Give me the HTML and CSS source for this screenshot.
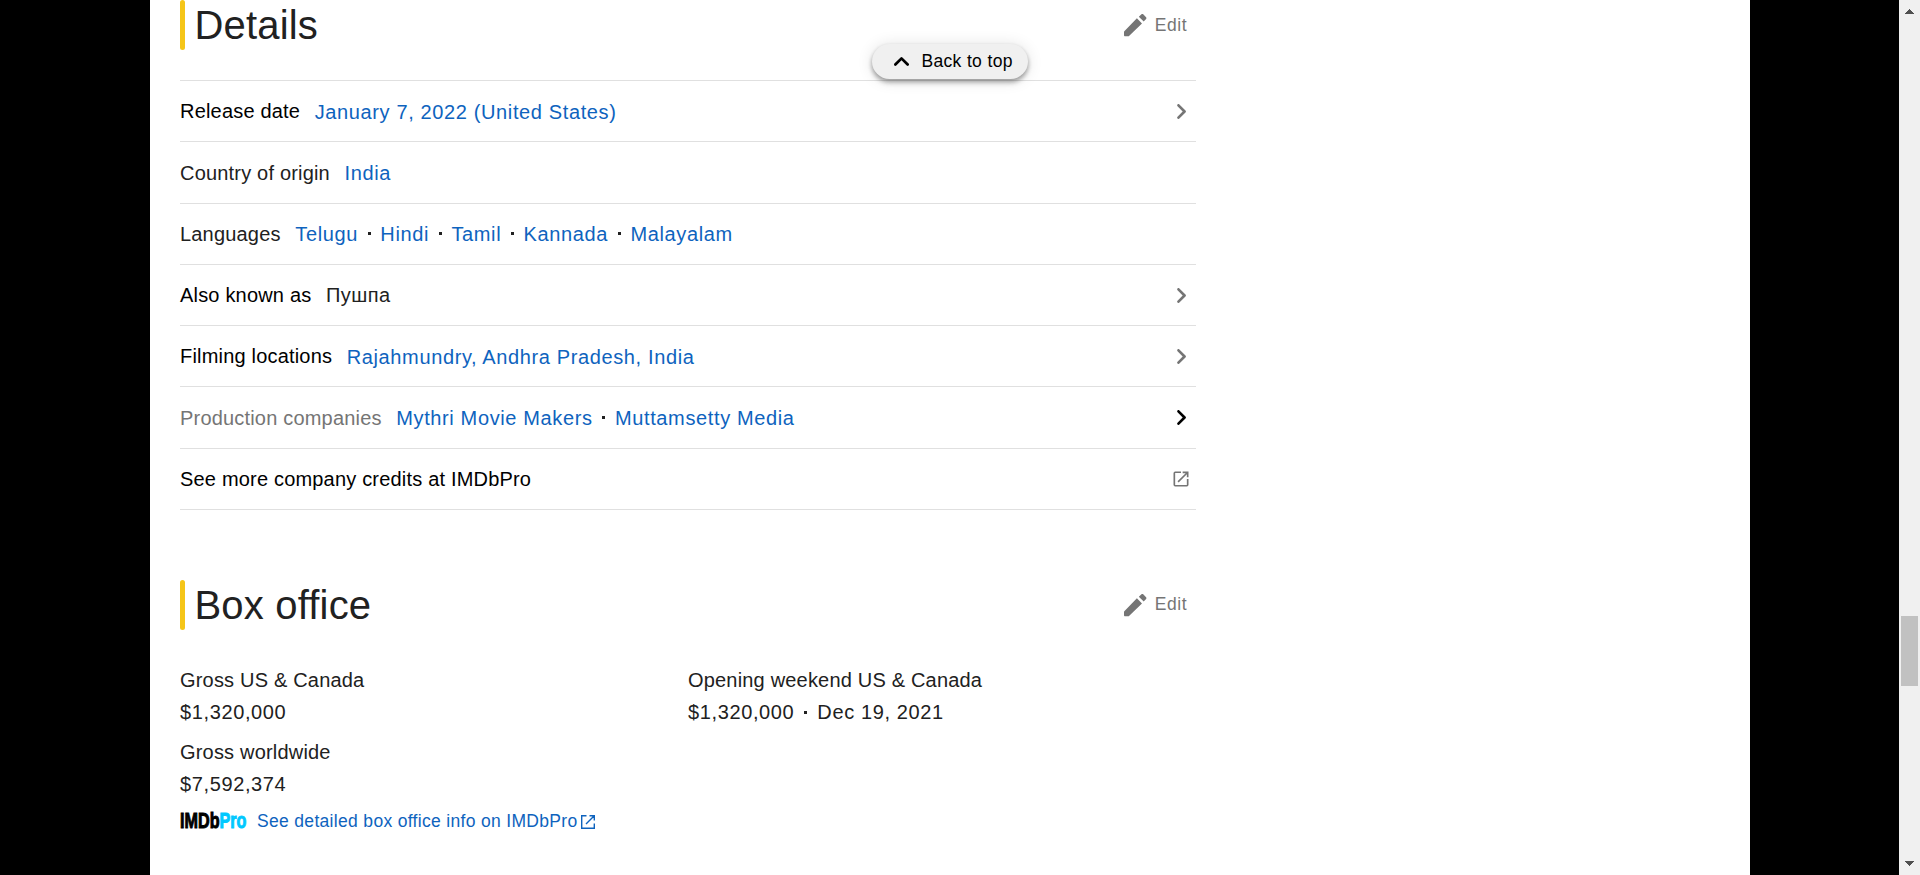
FILE: index.html
```html
<!DOCTYPE html>
<html lang="en">
<head>
<meta charset="utf-8">
<title>Details</title>
<link rel="stylesheet" href="styles.css">
</head>
<body>
<svg class="defs" width="0" height="0">
  <symbol id="pencil" viewBox="0 0 24 24"><path d="M1 18.6V21.8c0 .6.4 1 1 1h3.2c.3 0 .5-.1.7-.3L18.6 10.200 13.600 5.200 1.300 17.900c-.2.200-.3.400-.3.700z"/><path d="M22.600 5.800c.5-.5.5-1.200 0-1.700L19.800 1.300c-.5-.5-1.200-.5-1.700 0L15.500 3.600 20.300 8.400z"/></symbol>
  <symbol id="chevron" viewBox="0 0 24 24"><path d="M5.622.631A2.153 2.153 0 0 0 5 2.147c0 .568.224 1.113.622 1.515l8.249 8.340-8.250 8.340a2.160 2.160 0 0 0-.548 2.070c.196.740.768 1.317 1.499 1.515a2.104 2.104 0 0 0 2.048-.555l9.758-9.866a2.153 2.153 0 0 0 0-3.030L8.620.610C7.812-.207 6.430-.207 5.622.630z"/></symbol>
  <symbol id="external" viewBox="0 0 24 24"><path d="M19 19.200H5V4.800h7V3H5a2 2 0 0 0-2 2v14a2 2 0 0 0 2 2h14a2 2 0 0 0 2-2v-7h-2zM14 3v2h3.600l-9.800 9.800 1.400 1.400L19 6.400V10h2V3z"/></symbol>
</svg>
<div class="window">
  <div class="page">
    <main class="content">
      <section>
        <header class="section-head">
          <h2 class="title">Details</h2>
          <a class="edit"><svg class="pencil"><use href="#pencil"/></svg>Edit</a>
        </header>
        <ul class="facts">
          <li class="fact"><span class="label strong">Release date</span><span class="value low"><a>January 7, 2022 (United States)</a></span><svg class="chevron"><use href="#chevron"/></svg></li>
          <li class="fact"><span class="label">Country of origin</span><span class="value"><a>India</a></span></li>
          <li class="fact"><span class="label">Languages</span><span class="value"><a>Telugu</a><i class="dot"></i><a>Hindi</a><i class="dot"></i><a>Tamil</a><i class="dot"></i><a>Kannada</a><i class="dot"></i><a>Malayalam</a></span></li>
          <li class="fact"><span class="label strong">Also known as</span><span class="value plain">Пушпа</span><svg class="chevron"><use href="#chevron"/></svg></li>
          <li class="fact"><span class="label strong">Filming locations</span><span class="value low"><a>Rajahmundry, Andhra Pradesh, India</a></span><svg class="chevron"><use href="#chevron"/></svg></li>
          <li class="fact"><span class="label muted">Production companies</span><span class="value"><a>Mythri Movie Makers</a><i class="dot"></i><a>Muttamsetty Media</a></span><svg class="chevron active"><use href="#chevron"/></svg></li>
          <li class="fact"><span class="label strong">See more company credits at IMDbPro</span><svg class="external"><use href="#external"/></svg></li>
        </ul>
      </section>
      <section class="box-office">
        <header class="section-head">
          <h2 class="title">Box office</h2>
          <a class="edit"><svg class="pencil"><use href="#pencil"/></svg>Edit</a>
        </header>
        <div class="grosses">
          <div class="gross"><div class="gross-name">Gross US &amp; Canada</div><div>$1,320,000</div></div>
          <div class="gross"><div class="gross-name">Opening weekend US &amp; Canada</div><div>$1,320,000<i class="dot"></i>Dec 19, 2021</div></div>
          <div class="gross"><div class="gross-name">Gross worldwide</div><div>$7,592,374</div></div>
        </div>
        <div class="pro">
          <svg class="logo" viewBox="0 0 68 28"><text class="logo-text" transform="scale(.735 1)" x="0" y="21.800">IMDb<tspan class="cyan">Pro</tspan></text></svg>
          <a class="pro-link">See detailed box office info on IMDbPro</a>
          <svg class="pro-external" viewBox="0 0 14 14"><path d="M5.500.700H.700v12.600h12.600V8.500M8.500.700h4.800v4.800M13 1 5 9"/></svg>
        </div>
      </section>
    </main>
    <button class="to-top"><svg class="up"><use href="#chevron"/></svg>Back to top</button>
  </div>
  <div class="scrollbar">
    <svg class="arrow" viewBox="0 0 9 5"><path d="M4 0h1v1h1v1h1v1h1v1h1v1H0V4h1V3h1V2h1V1h1z"/></svg>
    <div class="thumb"></div>
    <svg class="arrow" viewBox="0 0 9 5"><path d="M0 0h9v1H8v1H7v1H6v1H5v1H4V4H3V3H2V2H1V1H0z"/></svg>
  </div>
</div>
</body>
</html>
```

FILE: styles.css
```css
* { box-sizing: border-box; }
body {
  margin: 0;
  background: #000;
  font-family: "Liberation Sans", Arial, sans-serif;
  font-size: 20px;
  color: #212121;
  overflow: hidden;
}
.defs { position: absolute; }
svg { display: block; flex: none; fill: currentColor; }
.window { display: flex; height: 875px; justify-content: space-between; }
.page { position: relative; width: 1600px; margin-left: 150px; padding-left: 30px; background: #fff; }
.content { width: 1016px; }
.section-head { display: flex; height: 50px; align-items: center; justify-content: space-between; }
.title { display: flex; align-items: center; gap: 9.4px; margin: 0; font-size: 40px; line-height: 50px; font-weight: 400; letter-spacing: .2px; }
.title::before { content: ""; width: 5px; height: 50px; border-radius: 3px; background: #f5c518; }
.edit { display: flex; align-items: center; gap: 7.500px; padding-right: 9px; font-size: 17.5px; letter-spacing: .5px; color: #757575; }
.pencil { width: 24.500px; height: 24.500px; }
.facts { list-style: none; margin: 30.2px 0 0; padding: 0; border-bottom: 1px solid #e0e0e0; }
.fact { display: flex; height: 61.25px; align-items: center; border-top: 1px solid #e0e0e0; line-height: 30px; white-space: nowrap; }
.label { margin-right: 14.6px; letter-spacing: .1875px; }
.strong { color: #000; }
.muted { color: #757575; }
.value { display: flex; align-items: center; letter-spacing: .625px; }
.low { padding-top: 2px; }
.plain { letter-spacing: .45px; }
.value a, .pro-link { color: #0e63be; }
.dot { display: inline-block; width: 3px; height: 3px; margin: 0 10px; background: #212121; vertical-align: 5px; }
.value .dot { margin: 0 9.7px; }
.chevron { width: 15px; height: 15px; margin: 0 7.500px 0 auto; color: #757575; }
.active { color: #000; }
.external { width: 20px; height: 20px; margin: 0 5px 0 auto; color: #757575; }
.box-office { margin-top: 70px; }
.grosses { display: grid; grid-template-columns: 1fr 1fr; margin-top: 34px; letter-spacing: .625px; }
.gross { height: 72px; line-height: 32px; }
.gross-name { letter-spacing: .1875px; }
.pro { display: flex; align-items: center; height: 28px; font-size: 17.5px; letter-spacing: .32px; }
.logo { width: 68px; height: 28px; margin: -3px 9px 0 0; }
.logo-text { font-size: 22px; font-weight: 700; letter-spacing: 0; fill: #000; stroke: #000; stroke-width: 1px; }
.cyan { fill: #00c8ff; stroke: #00c8ff; }
.pro-external { width: 14px; height: 14px; margin-left: 3.500px; fill: none; stroke: #0e63be; stroke-width: 1.4; }
.to-top {
  position: absolute; left: 722px; top: 44px;
  display: flex; align-items: center; gap: 12px;
  width: 156px; height: 35px; padding: 0 0 0 22.4px;
  border: 0; border-radius: 18px; background: #f0f0f0; color: #000;
  font: 17.5px "Liberation Sans", Arial, sans-serif; letter-spacing: .35px;
  box-shadow: 0 4px 5px rgba(0,0,0,.2), 0 1px 16px rgba(0,0,0,.12), 0 2px 4px rgba(0,0,0,.2);
}
.up { width: 15px; height: 15px; transform: rotate(-90deg); }
.scrollbar { display: flex; flex-direction: column; align-items: center; justify-content: space-between; width: 21px; padding: 9px 0; background: #f0f0f0; }
.arrow { width: 9px; height: 5px; fill: #505050; }
.thumb { width: 17px; height: 70px; margin: 602px 0 auto; background: #c1c1c1; }
```
